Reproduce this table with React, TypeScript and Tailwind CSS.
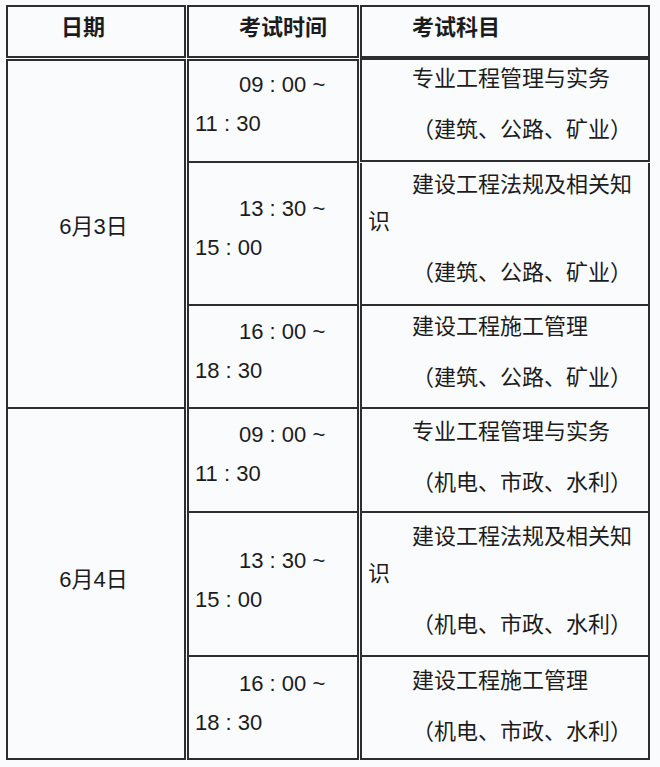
import React from "react";

type Slot = {
  start: string;
  end: string;
  subject: string;
  scope: string;
  rowH: string;
  timePad: string;
  subjPad: string;
};

type Day = {
  date: string;
  datePad: string;
  slots: Slot[];
};

const days: Day[] = [
  {
    date: "6月3日",
    datePad: "pt-[151px]",
    slots: [
      { start: "09 : 00 ~", end: "11 : 30", subject: "专业工程管理与实务", scope: "（建筑、公路、矿业）", rowH: "h-[104px]", timePad: "pt-[4px]", subjPad: "pt-0 -mt-[1px]" },
      { start: "13 : 30 ~", end: "15 : 00", subject: "建设工程法规及相关知识", scope: "（建筑、公路、矿业）", rowH: "h-[143px]", timePad: "pt-[26px]", subjPad: "pt-[3px]" },
      { start: "16 : 00 ~", end: "18 : 30", subject: "建设工程施工管理", scope: "（建筑、公路、矿业）", rowH: "h-[103px]", timePad: "pt-[6px]", subjPad: "pt-[2px]" },
    ],
  },
  {
    date: "6月4日",
    datePad: "pt-[156px]",
    slots: [
      { start: "09 : 00 ~", end: "11 : 30", subject: "专业工程管理与实务", scope: "（机电、市政、水利）", rowH: "h-[104px]", timePad: "pt-[6px]", subjPad: "pt-[4px]" },
      { start: "13 : 30 ~", end: "15 : 00", subject: "建设工程法规及相关知识", scope: "（机电、市政、水利）", rowH: "h-[144px]", timePad: "pt-[28px]", subjPad: "pt-[5px]" },
      { start: "16 : 00 ~", end: "18 : 30", subject: "建设工程施工管理", scope: "（机电、市政、水利）", rowH: "h-[103px]", timePad: "pt-[7px]", subjPad: "pt-[5px]" },
    ],
  },
];

const App = () => {
  return (
    <div className="min-h-screen bg-[#f9fbfd] pl-[6px] pt-[5px] text-[22px] text-[#1c1c1c] font-['Liberation_Sans','Noto_Sans_CJK_SC',sans-serif]">
      {/* header */}
      <div className="grid grid-cols-[180px_172px_290px] gap-x-[1px] font-bold">
        <div className="h-[53px] border-2 border-[#2e2e2e] pl-[9px] pt-[2px] leading-[37px] indent-[44px]">日期</div>
        <div className="h-[53px] border-2 border-[#2e2e2e] pl-[6px] pt-[2px] leading-[37px] indent-[44px]">考试时间</div>
        <div className="h-[53px] border-2 border-[#2e2e2e] pl-[6px] pt-[2px] leading-[37px] indent-[44px]">考试科目</div>
      </div>

      <div className="mt-[1px]">
        {days.map((day, d) => (
          <div key={day.date} className="grid grid-cols-[180px_172px_290px] gap-x-[1px]">
            <div
              className={`row-span-3 border-2 border-[#2e2e2e] pr-[5px] text-center leading-[30px] ${day.datePad} ${d === 0 ? "" : "border-t-0"}`}
            >
              {day.date}
            </div>
            {day.slots.map((s, i) => {
              const top = d === 0 && i === 0 ? "" : "border-t-0";
              return (
                <React.Fragment key={i}>
                  <div className={`col-start-2 ${s.rowH} border-2 border-[#2e2e2e] ${top} pl-[6px] ${s.timePad} leading-[39px]`}>
                    <div className="indent-[44px]">{s.start}</div>
                    <div>{s.end}</div>
                  </div>
                  <div className={`col-start-3 ${s.rowH} border-2 border-[#2e2e2e] ${top} pl-[6px] pr-[4px] ${s.subjPad} leading-[37px]`}>
                    <p className="indent-[44px]">{s.subject}</p>
                    <p className="mt-[14px] indent-[44px]">{s.scope}</p>
                  </div>
                </React.Fragment>
              );
            })}
          </div>
        ))}
      </div>
    </div>
  );
};

export default App;
